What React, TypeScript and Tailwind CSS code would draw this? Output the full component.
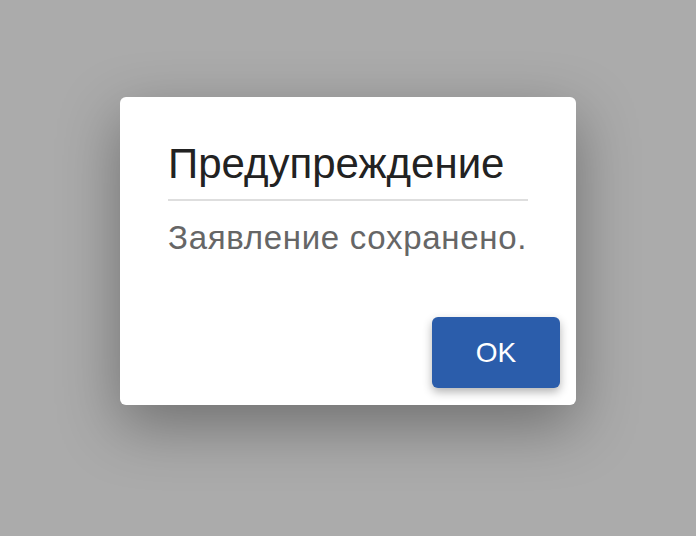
export default function App() {
  return (
    <div
      className="w-[696px] h-[536px] bg-[#ababab] flex items-start justify-center pt-[97px]"
      style={{ fontFamily: '"Liberation Sans", Arial, sans-serif' }}
    >
      <div className="w-[456px] h-[308px] bg-white rounded-md shadow-[0_20px_60px_rgba(0,0,0,0.35)] flex flex-col">
        <div className="px-12 pt-[43px]">
          <h2 className="text-[42px] leading-[48px] text-[#222] pb-[11px] border-b-2 border-[#dedede]">
            Предупреждение
          </h2>
          <p className="text-[33px] leading-[40px] tracking-[0.7px] text-[#666] mt-[17px]">Заявление сохранено.</p>
        </div>
        <div className="mt-auto flex justify-end pr-4 pb-[17px]">
          <button className="w-[128px] h-[71px] bg-[#2b5dab] rounded-md text-white text-[28px] shadow-[0_4px_10px_rgba(0,0,0,0.3)]">
            OK
          </button>
        </div>
      </div>
    </div>
  );
}
